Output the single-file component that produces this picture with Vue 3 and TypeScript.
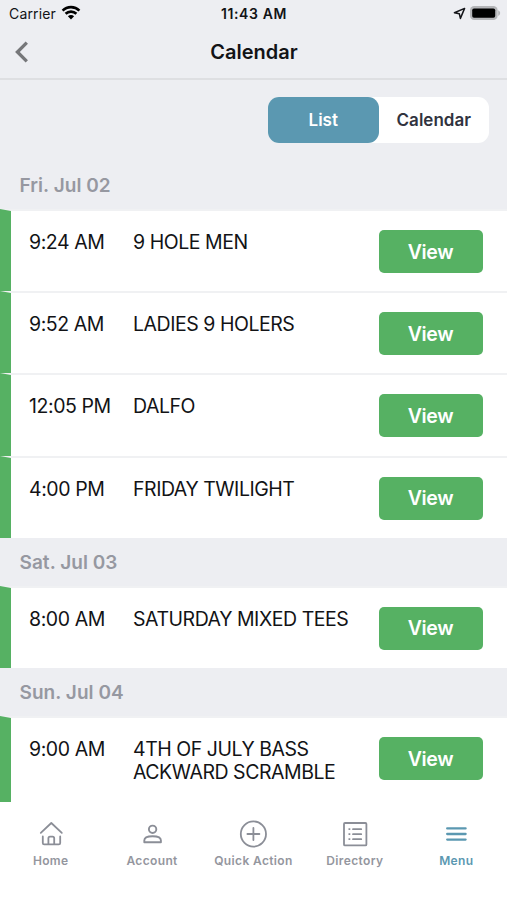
<script setup lang="ts">
interface CalendarEvent {
  time: string
  name: string
}

interface DayGroup {
  label: string
  events: CalendarEvent[]
}

const days: DayGroup[] = [
  {
    label: 'Fri. Jul 02',
    events: [
      { time: '9:24 AM', name: '9 HOLE MEN' },
      { time: '9:52 AM', name: 'LADIES 9 HOLERS' },
      { time: '12:05 PM', name: 'DALFO' },
      { time: '4:00 PM', name: 'FRIDAY TWILIGHT' },
    ],
  },
  { label: 'Sat. Jul 03', events: [{ time: '8:00 AM', name: 'SATURDAY MIXED TEES' }] },
  { label: 'Sun. Jul 04', events: [{ time: '9:00 AM', name: '4TH OF JULY BASS ACKWARD SCRAMBLE' }] },
]
</script>

<template>
  <div class="screen">
    <header class="top">
      <div class="status">
        <div class="carrier">
          <span>Carrier</span>
          <svg width="20" height="16" viewBox="0 0 20 16" fill="none" stroke="#000" stroke-width="2.6">
            <path d="M1.6 5.6C6.2 1 13.8 1 18.4 5.6" />
            <path d="M4.6 8.8C7.6 5.9 12.4 5.9 15.4 8.8" />
            <path d="M10 14.4L6.9 11.3C8.7 9.6 11.3 9.6 13.1 11.3Z" fill="#000" stroke="none" />
          </svg>
        </div>
        <span class="clock">11:43 AM</span>
        <div class="indicators">
          <svg width="13" height="13" viewBox="0 0 13 13" fill="none" stroke="#15161a" stroke-width="1.5" stroke-linejoin="round">
            <path d="M11.6 1.4L1.4 5.7L6.3 6.7L7.4 11.4Z" />
          </svg>
          <svg width="32" height="16" viewBox="0 0 32 16">
            <rect x="1" y="1.1" width="27.6" height="14" rx="4.2" fill="#b4b5b8" />
            <rect x="3.2" y="3.5" width="23" height="9.2" rx="1.8" fill="#000" />
            <path d="M29.2 5.2Q31.2 6.2 31.2 8.1Q31.2 10 29.2 11Z" fill="#b4b5b8" />
          </svg>
        </div>
      </div>
      <div class="nav">
        <svg class="back" width="14" height="22" viewBox="0 0 14 22" fill="none" stroke="#76777a" stroke-width="3.3">
          <path d="M12.8 1.6L3.4 11L12.8 20.4" />
        </svg>
        <h1>Calendar</h1>
      </div>
    </header>

    <div class="toggle-row">
      <div class="toggle">
        <button class="option active">List</button>
        <button class="option">Calendar</button>
      </div>
    </div>

    <main class="agenda">
      <section v-for="day in days" :key="day.label" class="day">
        <h2>{{ day.label }}</h2>
        <article v-for="event in day.events" :key="event.name" class="event">
          <span class="time">{{ event.time }}</span>
          <span class="name">{{ event.name }}</span>
          <button class="view">View</button>
        </article>
      </section>
    </main>

    <nav class="tabs">
      <a class="tab">
        <svg width="28" height="28" viewBox="0 0 28 28" fill="none" stroke="#8b8e97" stroke-width="1.8" stroke-linecap="round" stroke-linejoin="round">
          <path d="M3.8 12.8L14.3 3L24.8 12.8" />
          <path d="M5.8 16.4V23Q5.8 24.4 7.2 24.4H21.8Q23.2 24.4 23.2 23V16.4" />
          <path d="M11.4 24.2V18.2Q11.4 16.6 13 16.6H15.6Q17.2 16.6 17.2 18.2V24.2" />
        </svg>
        <span>Home</span>
      </a>
      <a class="tab">
        <svg width="28" height="28" viewBox="0 0 28 28" fill="none" stroke="#8b8e97" stroke-width="1.9" stroke-linejoin="round">
          <circle cx="14.6" cy="9.3" r="3.7" />
          <path d="M6.3 22.3V20.4C6.3 17.5 9.8 16.2 14.6 16.2S22.9 17.5 22.9 20.4V22.3Z" />
        </svg>
        <span>Account</span>
      </a>
      <a class="tab">
        <svg width="28" height="28" viewBox="0 0 28 28" fill="none" stroke="#8b8e97" stroke-width="1.8">
          <circle cx="14.4" cy="14" r="12.6" />
          <path d="M14.4 8V20M8.4 14H20.4" stroke-linecap="round" />
        </svg>
        <span>Quick Action</span>
      </a>
      <a class="tab">
        <svg width="28" height="28" viewBox="0 0 28 28" fill="none" stroke="#8b8e97" stroke-width="1.8">
          <rect x="3" y="3" width="22.4" height="22.4" rx="1" />
          <path d="M12 9.2H20.2M12 14.2H20.2M12 19.2H20.2" stroke-linecap="round" />
          <path d="M7.5 9.2H9.3M7.5 14.2H9.3M7.5 19.2H9.3" />
        </svg>
        <span>Directory</span>
      </a>
      <a class="tab current">
        <svg width="28" height="28" viewBox="0 0 28 28" fill="none" stroke="#5b98b1" stroke-width="2.3" stroke-linecap="round">
          <path d="M5.2 8.4H23.6M5.2 14H23.6M5.2 19.6H23.6" />
        </svg>
        <span>Menu</span>
      </a>
    </nav>
  </div>
</template>

<style>
body {
  margin: 0;
  background: #fff;
}
</style>

<style scoped>
.screen {
  box-sizing: border-box;
  width: 507px;
  height: 900px;
  display: flex;
  flex-direction: column;
  overflow: hidden;
  background: #edeef2;
  color: #121316;
  font-family: Inter, "Liberation Sans", sans-serif;
}

button {
  border: 0;
  margin: 0;
  padding: 0;
  font-family: inherit;
}

.top {
  flex: none;
  box-sizing: border-box;
  height: 80px;
  border-bottom: 2px solid #dedfe2;
}

.status {
  display: grid;
  grid-template-columns: 1fr auto 1fr;
  align-items: center;
  height: 28px;
  padding: 0 6px 0 9px;
  font-size: 14px;
  line-height: 28px;
}

.carrier {
  display: flex;
  align-items: center;
  gap: 5px;
  letter-spacing: 0.15px;
}

.carrier svg {
  margin-top: -3px;
}

.clock {
  padding-right: 2px;
  font-weight: 600;
  font-size: 14px;
  letter-spacing: 0.6px;
}

.indicators {
  display: flex;
  align-items: center;
  justify-content: flex-end;
  gap: 3px;
  margin-top: -2px;
}

.nav {
  display: grid;
  grid-template-columns: 1fr auto 1fr;
  align-items: center;
  height: 48px;
  padding: 0 14px;
}

h1 {
  margin: 0;
  padding-left: 1px;
  font-size: 20px;
  font-weight: 600;
}

.toggle-row {
  flex: none;
  box-sizing: border-box;
  display: flex;
  justify-content: flex-end;
  height: 81px;
  padding: 17px 18px 0 0;
}

.toggle {
  display: grid;
  grid-template-columns: 1fr 1fr;
  width: 221px;
  height: 46px;
  border-radius: 11px;
  background: #fff;
}

.option {
  border-radius: 11px;
  background: transparent;
  color: #31333e;
  font-size: 17px;
  font-weight: 600;
}

.option.active {
  background: #5b98b1;
  color: #fff;
}

.agenda {
  flex: none;
  height: 641px;
  overflow: hidden;
}

h2 {
  margin: 0;
  padding-left: 19.5px;
  height: 48.1px;
  line-height: 49px;
  font-size: 19px;
  font-weight: 600;
  letter-spacing: 0.05px;
  color: #9698a1;
}

.event {
  box-sizing: border-box;
  display: grid;
  grid-template-columns: 104px 1fr 104px;
  align-items: start;
  height: 82.2px;
  padding: 19px 24.5px 0 18px;
  border-left: 11px solid #56b163;
  border-top: 2px solid #f0f1f3;
  background: #fff;
  font-size: 19.5px;
  line-height: 23px;
}

.day:last-child .event {
  height: 90px;
}

.time {
  padding-top: 1px;
  letter-spacing: -0.42px;
}

.name {
  padding: 1px 20px 0 0;
  letter-spacing: -0.46px;
}

.view {
  height: 43px;
  border-radius: 5px;
  background: #56b163;
  color: #fff;
  font-size: 19.5px;
  font-weight: 600;
  letter-spacing: -0.3px;
}

.tabs {
  flex: 1;
  display: grid;
  grid-template-columns: repeat(5, 1fr);
  padding-top: 18px;
  background: #fff;
}

.tab {
  display: flex;
  flex-direction: column;
  align-items: center;
  gap: 4px;
  color: #94969e;
  font-size: 12px;
  font-weight: 600;
  line-height: 18px;
  letter-spacing: 0.36px;
  white-space: nowrap;
}

.current {
  color: #5b98b1;
}
</style>
